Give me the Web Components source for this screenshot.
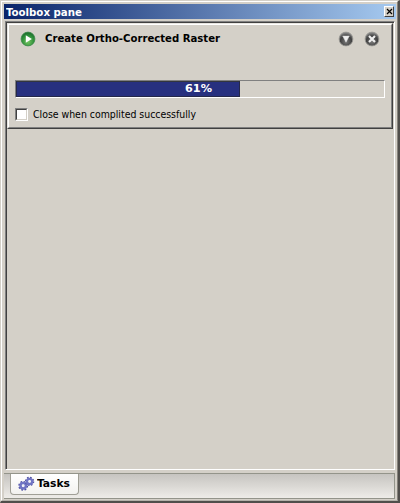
<!DOCTYPE html>
<html lang="en"><head><meta charset="utf-8"><title>Toolbox pane</title>
<style>html,body{margin:0;height:100%;overflow:hidden;background:#d4d0c8}</style></head><body>
<tool-window>
<title-bar slot="title">Toolbox pane</title-bar>
<task-card><fit-text slot="name" w="175" bold>Create Ortho-Corrected Raster</fit-text>
<progress-meter value="61"></progress-meter>
<check-option><fit-text w="163">Close when complited successfully</fit-text></check-option></task-card>
<tab-strip slot="tabs"><fit-text w="33" bold>Tasks</fit-text></tab-strip>
</tool-window>
<script>
const define=(name,html,init)=>customElements.define(name,class extends HTMLElement{
 connectedCallback(){if(this.shadowRoot)return;const t=document.createElement('template');t.innerHTML='<style>*{box-sizing:border-box}svg{display:block;flex:none}</style>'+html;
 this.attachShadow({mode:'open'}).append(t.content.cloneNode(true));if(init)init(this,this.shadowRoot);}});
define('tool-window',`<style>:host{display:flex;flex-direction:column;width:400px;height:503px;background:#d4d0c8;font-family:"DejaVu Sans Condensed","DejaVu Sans",sans-serif;font-stretch:condensed;font-size:11px;color:#000;border:1px solid #d4d0c8;border-right:2px solid #504e4b;border-bottom:2px solid #504e4b;box-sizing:border-box}
.in{flex:1;min-height:0;display:flex;flex-direction:column;border:1px solid #fff;border-right-color:#85827b;border-bottom-color:#b4b1aa;padding:2px 1px 0 2px}
.pane{height:449px;margin:2px 0 0 1px;border:1px solid #808080;border-right:1px solid #fff;border-bottom:1px solid #fff;width:390px}
.client{height:447px;border-left:1px solid #404040;border-top:1px solid #404040}</style>
<div class="in"><slot name="title"></slot><div class="pane"><div class="client"><slot></slot></div></div><slot name="tabs"></slot></div>`);
define('title-bar',`<style>:host{display:flex;height:15px;width:392px;align-items:center;justify-content:space-between;background:linear-gradient(90deg,#0a246a,#a6caf0);color:#fff;padding:0 2px;box-sizing:border-box}
fit-text{padding-top:1px}
.x{width:10px;height:11px;background:#d4d0c8;border:1px solid #fff;border-right-color:#404040;border-bottom-color:#404040;display:flex;align-items:center;justify-content:center}</style>
<fit-text w="76" bold><slot></slot></fit-text><div class="x"><svg width="7" height="7"><path d="M1 1L6 6M6 1L1 6" stroke="#000" stroke-width="1.2"/></svg></div>`);
define('round-icon',`<svg width="16" height="16" viewBox="0 0 16 16"></svg>`,(h,r)=>{
const k=h.getAttribute('kind'),green=k=='play';h.style.display='block';
r.querySelector('svg').innerHTML=`<defs><radialGradient id="g" cx=".5" cy=".7" r=".65"><stop stop-color="${green?'#72c360':'#777'}"/><stop offset=".65" stop-color="${green?'#31923c':'#404040'}"/><stop offset="1" stop-color="${green?'#1d702d':'#858585'}"/></radialGradient></defs><circle cx="8" cy="8" r="6.9" fill="url(#g)" stroke="${green?'#398847':'#969491'}" stroke-width=".8"/>`+
({play:'<path d="M5.8 4.3V11.7L11.9 8Z" fill="#fff"/>',down:'<path d="M4.7 5H11.3L8 11.2Z" fill="#eee" stroke="#ddd" stroke-width=".5"/>',close:'<path d="M5 5L11 11M11 5L5 11" stroke="#eee" stroke-width="2.2"/>'})[k]});
define('task-card',`<style>:host{display:block;width:386px;height:106px;border:1px solid #e8e6e1;border-right-color:#404040;border-bottom-color:#404040;box-sizing:border-box}
.b{height:104px;border:1px solid #fff;border-right-color:#808080;border-bottom-color:#808080;padding:6px 6px 0}
.h{display:flex;align-items:center;height:16px;padding-left:5px}.h slot{display:block;margin-left:9px;padding-bottom:1px}.s{flex:1}.a{display:flex;gap:10px;margin-right:5px}</style>
<div class="b"><div class="h"><round-icon kind="play"></round-icon><slot name="name"></slot><div class="s"></div><div class="a"><round-icon kind="down"></round-icon><round-icon kind="close"></round-icon></div></div><slot></slot></div>`);
define('progress-meter',`<style>:host{display:grid;width:370px;height:18px;margin-top:33px;border:1px solid #808080;border-right-color:#fff;border-bottom-color:#fff;box-sizing:border-box;color:#fff}
.f,.t{grid-area:1/1}.f{background:#27307f;border:1px solid #252849;border-top-color:#33363e;height:16px}.t{display:flex;justify-content:center;padding:1px 3px 0 0}</style><div class="f"></div><div class="t"><fit-text w="27" bold></fit-text></div>`,
(h,r)=>{const v=h.getAttribute('value');r.querySelector('.f').style.width=v*3.68+'px';r.querySelector('fit-text').textContent=v+'%'});
define('check-option',`<style>:host{display:flex;gap:5px;margin-top:10px;height:14px}.c{width:13px;height:13px;background:#fff;border:1px solid #808080;border-right-color:#fff;border-bottom-color:#fff}.c i{display:block;width:11px;height:11px;border:1px solid #404040;border-right-color:#d4d0c8;border-bottom-color:#d4d0c8}</style><div class="c"><i></i></div><slot></slot>`);
define('gear-pair',`<svg width="17" height="16" viewBox="0 0 17 16"></svg>`,(h,r)=>{
const gear=(x,y,s)=>`<g transform="translate(${x} ${y}) scale(${s})"><circle r="4.5" fill="none" stroke="#4b4ca0" stroke-width="2" stroke-dasharray="1.9 1.634"/><circle r="3" fill="none" stroke="#7074c4" stroke-width="2.8"/><circle r="1.2" fill="#eeeef8"/></g>`;
r.querySelector('svg').innerHTML=gear(5.2,9.8,.9)+gear(11.6,5.4,.85)});
define('tab-strip',`<style>:host{display:block;height:26px;width:391px;margin-top:3px;border-top:1px solid #93948a;border-right:1px solid #93948a;border-bottom:1px solid #93948a;background:linear-gradient(#c6c4c0,#eeece8);padding-left:6px;box-sizing:border-box}
.t{width:69px;height:21px;display:flex;align-items:center;gap:2px;padding-left:7px;background:linear-gradient(#fff,#f3f2ef);border:1px solid #a09f96;border-top:0;border-radius:0 0 4px 4px}</style><div class="t"><gear-pair></gear-pair><slot></slot></div>`);
// Text scaled horizontally to a fixed advance width; defined last so that inherited fonts apply when it measures.
define('fit-text',`<style>:host{display:block;height:14px;line-height:14px;white-space:nowrap;font-size:11px;flex:none}:host([bold]){font-weight:bold}span{display:inline-block;transform-origin:0 50%}</style><span><slot></slot></span>`,
(h,r)=>{const w=+h.getAttribute('w'),s=r.querySelector('span');h.style.width=w+'px';s.style.transform='scaleX('+w/s.getBoundingClientRect().width+')'});
</script></body></html>
